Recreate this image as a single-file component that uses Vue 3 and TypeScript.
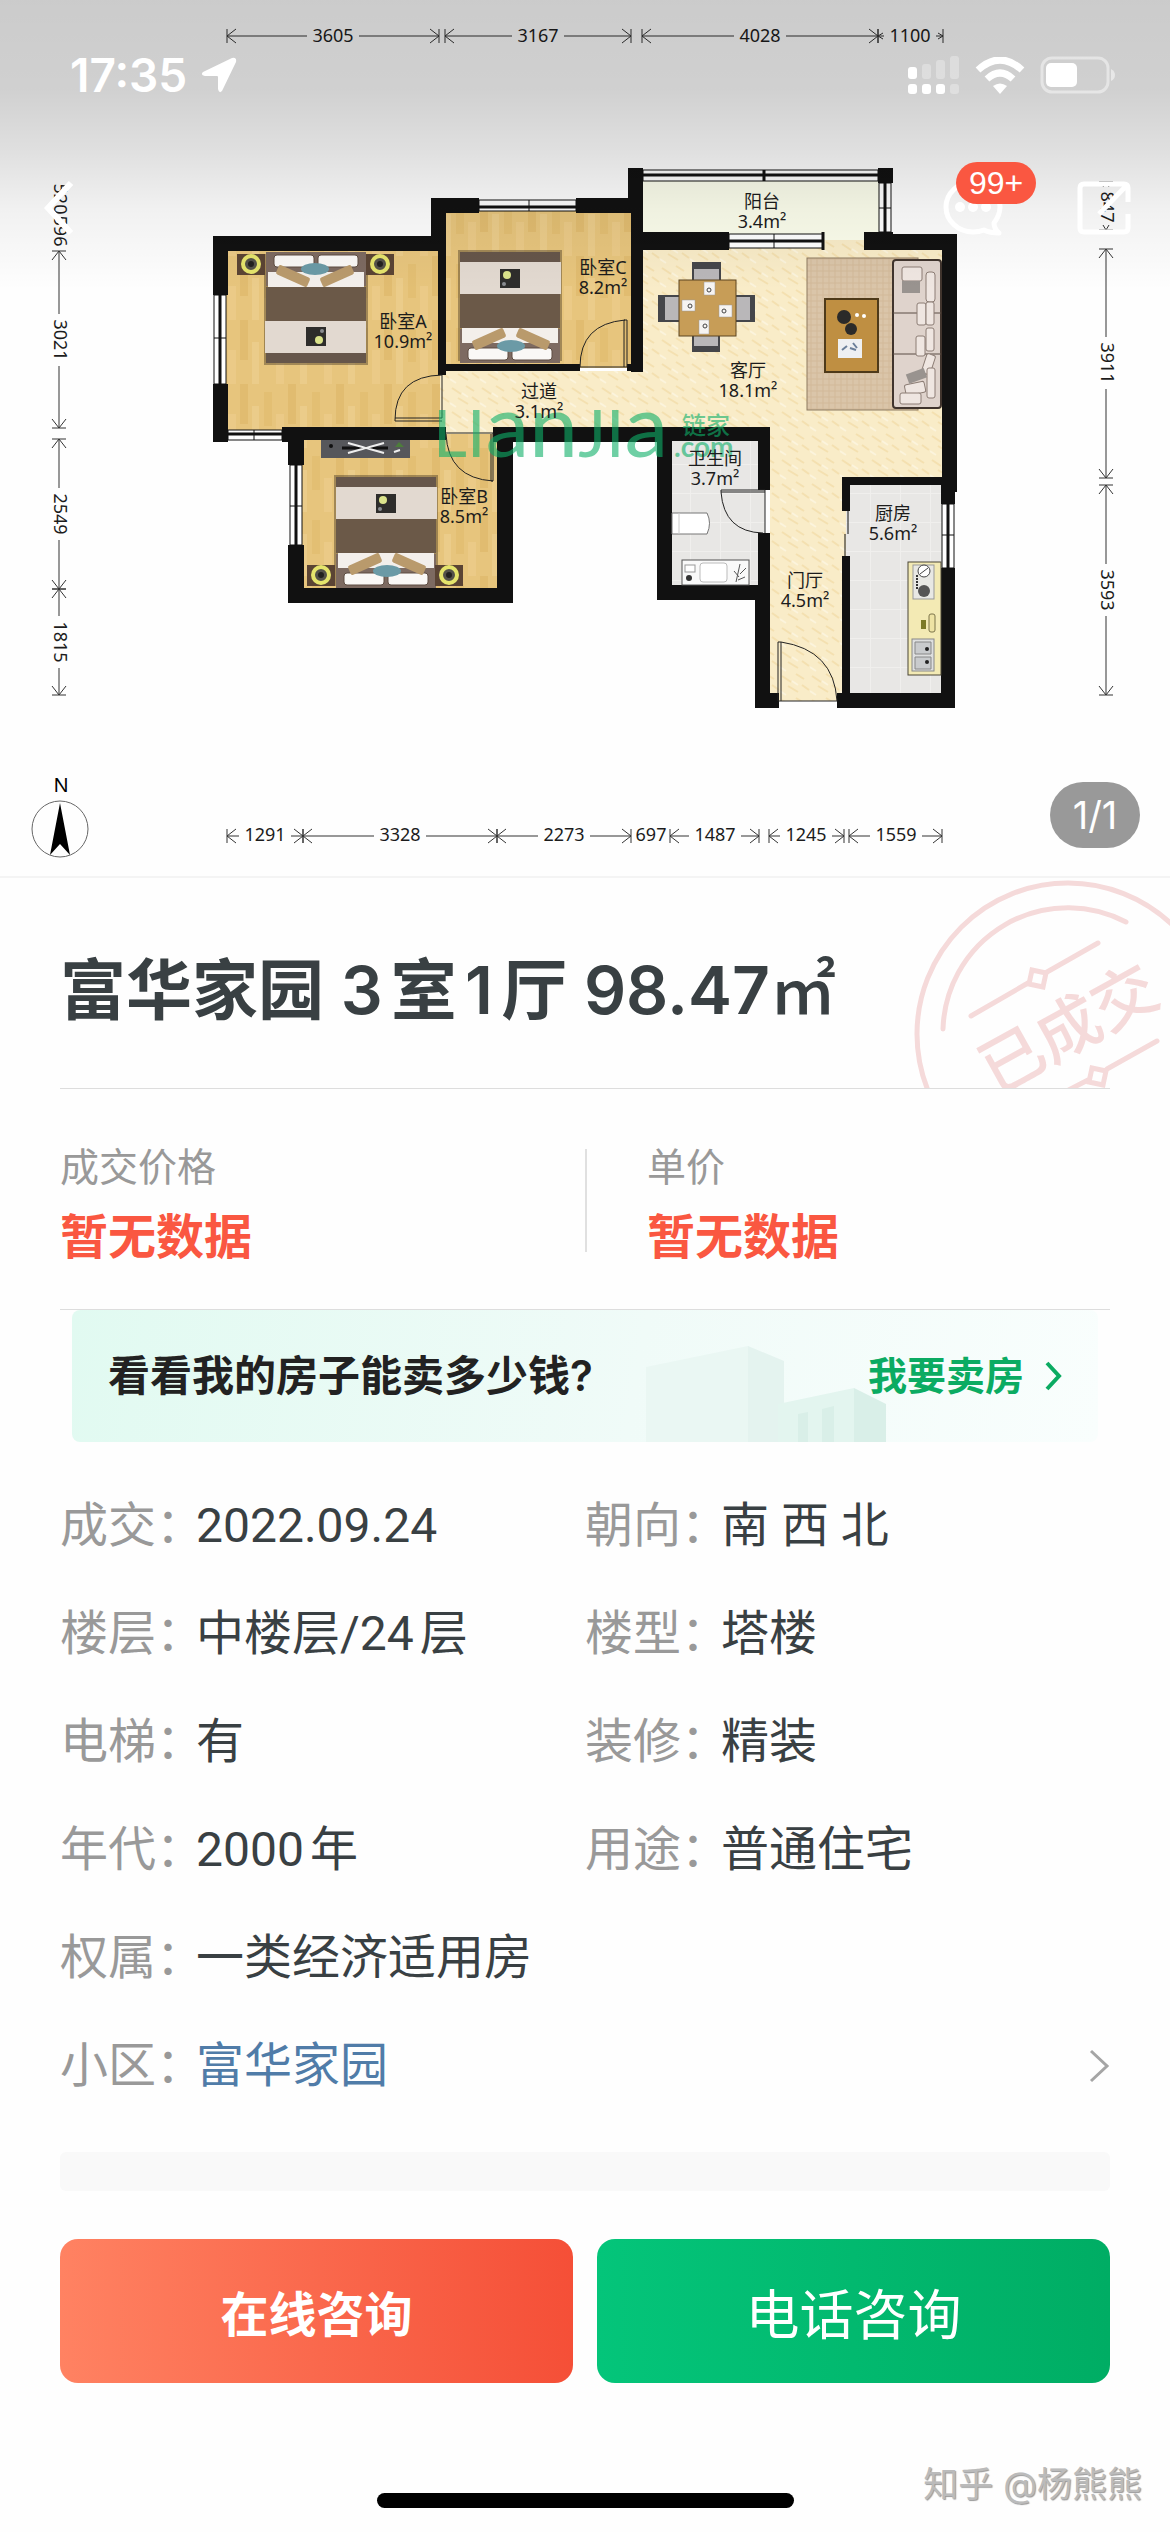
<script setup lang="ts">
interface Dim {
  label: string
  from: number
  to: number
  mid: number
  bare?: boolean
}

interface Room {
  name: string
  area: string
  x: number
  y: number
}

interface Fact {
  label: string
  value: string
}

const topDims: Dim[] = [
  { label: '3605', from: 227, to: 439, mid: 333 },
  { label: '3167', from: 445, to: 631, mid: 538 },
  { label: '4028', from: 642, to: 878, mid: 760 },
  { label: '1100', from: 878, to: 943, mid: 910 },
]

const bottomDims: Dim[] = [
  { label: '1291', from: 227, to: 303, mid: 265 },
  { label: '3328', from: 303, to: 497, mid: 400 },
  { label: '2273', from: 497, to: 631, mid: 564 },
  { label: '697', from: 631, to: 670, mid: 651, bare: true },
  { label: '1487', from: 670, to: 759, mid: 715 },
  { label: '1245', from: 769, to: 844, mid: 806 },
  { label: '1559', from: 849, to: 942, mid: 896 },
]

const leftDims: Dim[] = [
  { label: '520', from: 183, to: 214, mid: 199, bare: true },
  { label: '596', from: 214, to: 246, mid: 231, bare: true },
  { label: '3021', from: 251, to: 428, mid: 340 },
  { label: '2549', from: 439, to: 589, mid: 514 },
  { label: '1815', from: 589, to: 695, mid: 642 },
]

const rightDims: Dim[] = [
  { label: '847', from: 182, to: 230, mid: 207 },
  { label: '3911', from: 249, to: 478, mid: 363 },
  { label: '3593', from: 485, to: 695, mid: 590 },
]

// Dimension line along the x axis, centred on y = 0, with a gap for its label.
function dimPath(d: Dim): string {
  if (d.bare) return ''
  const head = d.to - d.from < 70 ? 5 : 9
  const gap = 26
  let p = `M${d.from} -7V7M${d.to} -7V7`
  p += `M${d.from + head} -${head - 2}L${d.from} 0L${d.from + head} ${head - 2}`
  p += `M${d.to - head} -${head - 2}L${d.to} 0L${d.to - head} ${head - 2}`
  if (d.mid - gap > d.from) p += `M${d.from} 0H${d.mid - gap}`
  if (d.mid + gap < d.to) p += `M${d.mid + gap} 0H${d.to}`
  return p
}

const rooms: Room[] = [
  { name: '卧室A', area: '10.9m²', x: 403, y: 328 },
  { name: '卧室C', area: '8.2m²', x: 603, y: 274 },
  { name: '过道', area: '3.1m²', x: 539, y: 398 },
  { name: '卧室B', area: '8.5m²', x: 464, y: 503 },
  { name: '阳台', area: '3.4m²', x: 762, y: 208 },
  { name: '客厅', area: '18.1m²', x: 748, y: 377 },
  { name: '卫生间', area: '3.7m²', x: 715, y: 465 },
  { name: '厨房', area: '5.6m²', x: 893, y: 520 },
  { name: '门厅', area: '4.5m²', x: 805, y: 587 },
]

const beds = [
  'translate(266 252)',
  'translate(560 363) rotate(180)',
  'translate(436 588) rotate(180)',
]

const lamps = [
  [251, 264],
  [380, 264],
  [321, 575],
  [449, 575],
]

const facts: Fact[] = [
  { label: '成交', value: '2022.09.24' },
  { label: '朝向', value: '南 西 北' },
  { label: '楼层', value: '中楼层/24层' },
  { label: '楼型', value: '塔楼' },
  { label: '电梯', value: '有' },
  { label: '装修', value: '精装' },
  { label: '年代', value: '2000年' },
  { label: '用途', value: '普通住宅' },
  { label: '权属', value: '一类经济适用房' },
]
</script>

<template>
  <main class="page">
    <section class="hero">
      <svg class="plan" viewBox="0 0 1170 876" role="img" aria-label="户型图">
        <defs>
          <pattern id="wood" width="48" height="64" patternUnits="userSpaceOnUse">
            <rect width="48" height="64" fill="#e7c57d" />
            <rect width="8" height="40" fill="#e1bc70" />
            <rect x="12" y="22" width="7" height="42" fill="#ebcc8a" />
            <rect x="24" y="8" width="8" height="34" fill="#e3bf73" />
            <rect x="36" y="30" width="8" height="34" fill="#ebca87" />
          </pattern>
          <pattern id="marble" width="30" height="24" patternUnits="userSpaceOnUse">
            <rect width="30" height="24" fill="#f9ecc8" />
            <path d="M2 4l9 6M16 2l8 5M8 14l10 6M22 13l7 5" stroke="#f4e0b0" stroke-width="2" />
            <path d="M12 9l6 4M0 19l6 4" stroke="#fcf4dc" stroke-width="2" />
          </pattern>
          <pattern id="tile" width="30" height="29" patternUnits="userSpaceOnUse">
            <rect width="30" height="29" fill="#e8e7e5" />
            <path d="M0 0H30M0 0V29" stroke="#f0efed" stroke-width="2" />
          </pattern>
          <pattern id="rug" width="6" height="6" patternUnits="userSpaceOnUse">
            <rect width="6" height="6" fill="#dac5a9" />
            <path d="M0 1H6M1 0V6" stroke="#d2b999" stroke-width="1" />
          </pattern>
        </defs>

        <g>
          <path d="M220 245H440V432H220zM440 205H636V368H440zM296 434H504V595H296z" fill="url(#wood)" />
          <path d="M440 371H640V240H950V482H846V701H770V430H493V434H440z" fill="url(#marble)" />
          <rect x="636" y="175" width="250" height="65" fill="#fcfeec" />
          <rect x="665" y="434" width="100" height="158" fill="url(#tile)" />
          <rect x="846" y="482" width="100" height="218" fill="url(#tile)" />
        </g>

        <path
          class="wall"
          d="M213 236H431V198H479V213H446V375H438V251H228V295H213z
             M213 384H228V442H213z M282 427H446V440H304V465H288V442H282z
             M288 545H304V588H497V442H493V427H770V490H758V441H672V585H758V533H770V693H779V708H755V600H657V442H513V603H288z
             M446 364H580V371H446z M576 198H628V168H643V232H729V250H643V372H631V371H627V364H631V213H576z
             M878 168H893V183H878z M864 232H893V234H957V492H955V504H941V485H850V511H842V477H942V250H864z
             M941 568H955V708H837V693H842V556H850V693H941z"
        />

        <g class="window">
          <path d="M479 200H576V211H479zM643 170H878V181H643zM879 183H891V232H879zM729 234H823V248H729zM214 295H226V384H214zM228 430H282V440H228zM290 465H302V545H290zM942 504H954V568H942z" />
          <path d="M848 511V534M845 534V556" />
          <path class="thick" d="M479 207H576M643 175H878M885 183V232M729 241H824M220 295V384M228 434H282M296 465V545M948 504V568M764 170V181M823 232V250" />
          <path d="M529 200V211M774 234V248M879 208H891M214 338H226M254 430V440M290 506H302M942 535H954" />
        </g>

        <g class="door">
          <path d="M395 420V421H442M395 418H442V375Q395 376 395 420" />
          <path d="M627 367V320H624V367M625 320Q580 324 580 367H627" />
          <path d="M446 433H493V481H491V434M446 434Q448 478 493 481" />
          <path d="M765 490V533M765 490H721V492H765M721 492Q724 532 763 533" />
          <path d="M778 701V642H781V701M781 642Q834 650 837 701H778" />
        </g>

        <g v-for="(bed, i) in beds" :key="i" :transform="bed">
          <rect x="-2" y="2" width="104" height="111" fill="#4d3d27" opacity=".45" />
          <rect width="100" height="34" fill="#7d6a61" />
          <rect x="2" y="20" width="96" height="17" fill="#f3efeb" />
          <rect x="8" y="3" width="40" height="12" rx="3" fill="#faf8f6" stroke="#5e4d42" />
          <rect x="52" y="3" width="40" height="12" rx="3" fill="#faf8f6" stroke="#5e4d42" />
          <rect x="10" y="19" width="34" height="10" rx="2" fill="#b99a6c" transform="rotate(24 27 24)" />
          <rect x="54" y="19" width="34" height="10" rx="2" fill="#b99a6c" transform="rotate(-24 71 24)" />
          <ellipse cx="49" cy="17" rx="14" ry="6" fill="#6b9aa6" />
          <rect y="35" width="100" height="34" fill="#6b5948" />
          <rect x="-1" y="69" width="101" height="32" fill="#e2d9d0" />
          <rect y="101" width="100" height="10" fill="#66564a" />
          <rect x="40" y="75" width="20" height="19" fill="#2e2d2b" />
          <circle cx="53" cy="88" r="4" fill="#dbe38b" />
          <circle cx="56" cy="79" r="2" fill="#8a8c90" />
        </g>

        <g v-for="([x, y], i) in lamps" :key="`lamp${i}`">
          <rect :x="x - 14" :y="y - 10" width="28" height="21" fill="#5b4434" />
          <circle :cx="x" :cy="y" r="8" fill="#54524a" stroke="#e5e46c" stroke-width="4" />
          <circle :cx="x" :cy="y" r="3" fill="#22211f" />
        </g>

        <g>
          <rect x="321" y="440" width="89" height="18" fill="#56575b" />
          <path d="M342 448H388" stroke="#111" stroke-width="3" />
          <path d="M348 443L384 453M348 453L384 443M394 452l6-2" stroke="#eee" stroke-width="2" />
          <circle cx="331" cy="446" r="2" fill="#111" />
          <path d="M395 447l4-5l5 5z" fill="#4d7d3b" />
        </g>

        <g>
          <path d="M692 262H721V282H692zM692 335H720V352H692zM658 295H682V322H658zM733 295H755V322H733z" fill="#45464a" />
          <path d="M694 269H719V282H694zM694 335H718V346H694zM665 297H682V320H665zM733 297H750V320H733z" fill="#b9b7b9" />
          <rect x="679" y="280" width="57" height="56" fill="#c79d57" stroke="#5d4520" />
          <path d="M704 282H715V295H704zM682 300H695V311H682zM719 305H732V317H719zM699 320H709V334H699z" fill="#f6f4f2" stroke="#999" stroke-width=".5" />
          <g fill="none" stroke="#444">
            <circle cx="709" cy="290" r="2" />
            <circle cx="690" cy="306" r="2" />
            <circle cx="724" cy="311" r="2" />
            <circle cx="705" cy="326" r="2" />
          </g>
        </g>

        <g>
          <rect x="807" y="258" width="111" height="152" fill="url(#rug)" stroke="#8d7a60" />
          <rect x="825" y="299" width="53" height="73" fill="#bf8f42" stroke="#4e3a1a" stroke-width="2" />
          <circle cx="844" cy="317" r="7" fill="#2b2a29" />
          <circle cx="851" cy="329" r="6" fill="#2b2a29" />
          <circle cx="857" cy="315" r="2" fill="#fff" />
          <circle cx="864" cy="316" r="2" fill="#fff" />
          <rect x="838" y="339" width="24" height="19" fill="#eef0f2" />
          <path d="M842 350l5-4M850 348l6 2M853 343l4 5" stroke="#6b7f99" stroke-width="2" />
          <rect x="893" y="260" width="48" height="148" rx="3" fill="#dfd3cc" stroke="#40342d" stroke-width="2" />
          <path d="M893 313H941M893 354H941" stroke="#5b4d45" />
          <g fill="#efe6e1" stroke="#8c7d75">
            <rect x="926" y="272" width="9" height="30" rx="3" />
            <rect x="902" y="267" width="20" height="14" rx="2" />
            <rect x="917" y="303" width="9" height="22" rx="2" />
            <rect x="926" y="302" width="8" height="23" rx="2" />
            <rect x="916" y="336" width="9" height="20" rx="2" />
            <rect x="926" y="328" width="8" height="23" rx="2" />
            <rect x="924" y="354" width="9" height="20" rx="2" transform="rotate(18 928 364)" />
            <rect x="927" y="368" width="8" height="30" rx="2" />
            <rect x="905" y="383" width="20" height="11" rx="2" transform="rotate(-12 915 388)" />
            <rect x="900" y="393" width="21" height="11" rx="2" />
          </g>
          <rect x="902" y="281" width="18" height="12" fill="#99938f" />
          <rect x="907" y="371" width="19" height="10" fill="#99938f" transform="rotate(-20 916 376)" />
        </g>

        <g>
          <path d="M672 513H707Q712 523 707 534H672z" fill="#fff" stroke="#777" />
          <path d="M679 513V534" stroke="#ccc" />
          <rect x="682" y="560" width="67" height="25" fill="#f9f9f9" stroke="#555" />
          <rect x="700" y="563" width="27" height="19" rx="3" fill="#fff" stroke="#bbb" />
          <rect x="685" y="565" width="10" height="7" fill="#fff" stroke="#999" />
          <circle cx="689" cy="578" r="3" fill="#333" />
          <path d="M736 582l4-18M740 574l6-6M739 577l-5-6M738 580l7-3" stroke="#555" />
        </g>

        <g>
          <rect x="908" y="562" width="33" height="113" fill="#f3eab4" stroke="#4a4636" />
          <rect x="913" y="565" width="21" height="34" fill="#e8e8e4" stroke="#999" />
          <circle cx="924" cy="571" r="6" fill="#fff" stroke="#444" />
          <path d="M920 574l8-6" stroke="#444" />
          <circle cx="924" cy="591" r="6" fill="#555" />
          <path d="M917 575V589" stroke="#333" stroke-width="2" stroke-dasharray="2 1" />
          <rect x="921" y="620" width="5" height="9" fill="#7d7a27" />
          <rect x="929" y="614" width="6" height="18" rx="2" fill="#eee3a4" stroke="#7c744b" />
          <rect x="912" y="639" width="22" height="32" fill="#dedfdf" stroke="#888" />
          <path d="M915 642H931V654H915zM915 657H931V669H915z" fill="#c9cbcd" stroke="#888" />
          <circle cx="927" cy="649" r="2" fill="#222" />
          <circle cx="927" cy="662" r="2" fill="#222" />
        </g>

        <g class="brand">
          <text x="433" y="457"><tspan class="caps">LI</tspan><tspan>an</tspan><tspan class="caps">JI</tspan><tspan>a</tspan></text>
          <text class="brand-cn" x="682" y="434">链家</text>
          <text class="brand-com" x="674" y="457">.com</text>
        </g>

        <g class="label">
          <template v-for="room in rooms" :key="room.name">
            <text :x="room.x" :y="room.y">{{ room.name }}</text>
            <text :x="room.x" :y="room.y + 20">{{ room.area }}</text>
          </template>
        </g>

        <g class="dim">
          <g v-for="d in topDims" :key="d.label" transform="translate(0 36)">
            <path :d="dimPath(d)" />
            <text :x="d.mid" y="6">{{ d.label }}</text>
          </g>
          <g v-for="d in bottomDims" :key="d.label" transform="translate(0 836)">
            <path :d="dimPath(d)" />
            <text :x="d.mid" y="5">{{ d.label }}</text>
          </g>
          <g v-for="d in leftDims" :key="d.label" transform="translate(59 0) rotate(90)">
            <path :d="dimPath(d)" />
            <text :x="d.mid" y="5">{{ d.label }}</text>
          </g>
          <g v-for="d in rightDims" :key="d.label" transform="translate(1106 0) rotate(90)">
            <path :d="dimPath(d)" />
            <text :x="d.mid" y="5">{{ d.label }}</text>
          </g>
        </g>

        <g>
          <text class="north" x="61" y="792">N</text>
          <circle cx="60" cy="829" r="28" fill="none" stroke="#666" />
          <path d="M60 803L70 855L60 844L50 855z" fill="#000" />
        </g>
      </svg>

      <header class="top">
        <div class="status">
          <span class="clock">17:35</span>
          <svg class="locate" viewBox="0 0 36 36" width="36" height="36" aria-hidden="true">
            <path d="M2 15L31 1Q36 0 35 5L21 34Q18 37 17 32V20Q17 19 16 19H4Q-1 18 2 15z" fill="#fff" />
          </svg>
          <svg class="signal" viewBox="0 0 52 38" width="52" height="38" fill="#fff" aria-hidden="true">
            <rect y="11" width="9" height="12" rx="3" />
            <g opacity=".3">
              <rect x="14" y="8" width="9" height="15" rx="3" />
              <rect x="28" y="4" width="9" height="19" rx="3" />
              <rect x="42" width="9" height="23" rx="3" />
              <rect x="42" y="28" width="9" height="10" rx="3" />
            </g>
            <rect y="28" width="9" height="10" rx="3" />
            <rect x="14" y="28" width="9" height="10" rx="3" />
            <rect x="28" y="28" width="9" height="10" rx="3" />
          </svg>
          <svg class="wifi" viewBox="0 0 50 37" width="50" height="37" aria-hidden="true">
            <path d="M3 13Q25 -7 47 13M12 22Q25 10 38 22" fill="none" stroke="#fff" stroke-width="7" />
            <path d="M18 29Q25 24 32 29L25 37z" fill="#fff" />
          </svg>
          <svg class="battery" viewBox="0 0 76 38" width="76" height="38" aria-hidden="true">
            <rect x="2" y="2" width="66" height="34" rx="10" fill="none" stroke="#fff" stroke-width="3" opacity=".45" />
            <path d="M71 13Q75 15 75 19T71 25z" fill="#fff" opacity=".5" />
            <rect x="6" y="7" width="31" height="24" rx="5" fill="#fff" />
          </svg>
        </div>
        <nav class="tools">
          <button class="tool" type="button" aria-label="返回">
            <svg viewBox="0 0 30 54" width="30" height="54"><path d="M27 2L4 27L27 52" fill="none" stroke="#fff" stroke-width="6" /></svg>
          </button>
          <button class="tool chat" type="button" aria-label="消息">
            <svg viewBox="0 0 62 56" width="62" height="56">
              <path d="M52 43Q58 35 58 27A27 25 0 1 0 31 52Q37 52 42 50Q48 53 57 53Q52 49 52 43z" fill="none" stroke="#fff" stroke-width="5" stroke-linejoin="round" />
              <g fill="#fff"><circle cx="18" cy="27" r="5" /><circle cx="31" cy="27" r="5" /><circle cx="44" cy="27" r="5" /></g>
            </svg>
            <span class="badge">99+</span>
          </button>
          <button class="tool" type="button" aria-label="分享">
            <svg viewBox="0 0 56 56" width="56" height="56">
              <path d="M52 22V8Q52 4 48 4H8Q4 4 4 8V48Q4 52 8 52H48Q52 52 52 48V34M51 5L23 34" fill="none" stroke="#fff" stroke-width="5" />
            </svg>
          </button>
        </nav>
      </header>
      <span class="counter">1/1</span>
    </section>

    <section class="headline">
      <svg class="stamp" viewBox="0 0 256 211" width="256" height="211" aria-hidden="true">
        <g fill="none" stroke="#f5dada" stroke-width="5" stroke-linecap="round">
          <circle cx="154" cy="156" r="151" />
          <path d="M29 151A125 125 0 0 1 212 44" />
          <path d="M57 138L114 105M133 94L184 65M143 218L174 202M193 191L243 163" />
          <path stroke-linecap="butt" d="M118 92L132 95L129 109L115 106zM178 190L192 193L189 207L175 204z" />
        </g>
        <text class="stamp-text" x="154" y="150" transform="rotate(-29 154 150)" dominant-baseline="central">已成交</text>
      </svg>
      <h1>富华家园 3室1厅 98.47<span class="unit">㎡</span></h1>
    </section>

    <dl class="prices">
      <div class="price">
        <dt>成交价格</dt>
        <dd>暂无数据</dd>
      </div>
      <div class="price">
        <dt>单价</dt>
        <dd>暂无数据</dd>
      </div>
    </dl>

    <a class="banner" href="#sell">
      <svg class="skyline" viewBox="0 0 240 98" width="240" height="98" aria-hidden="true">
        <path d="M0 23L102 2V98H0z" fill="#eaf7f3" />
        <path d="M102 2L138 17V98H102z" fill="#e4f3ef" />
        <path d="M132 60L208 44V98H132z" fill="#e3f5ef" />
        <path d="M208 44L240 60V98H208z" fill="#d9efe8" />
        <path d="M152 70l10-2V98H152zM176 65l12-3V98H176z" fill="#d9efe8" />
      </svg>
      <span class="question">看看我的房子能卖多少钱?</span>
      <span class="sell">我要卖房</span>
      <svg viewBox="0 0 18 30" width="18" height="30" aria-hidden="true">
        <path d="M3 2L15 15L3 28" fill="none" stroke="#0bab62" stroke-width="4" />
      </svg>
    </a>

    <dl class="facts">
      <div v-for="fact in facts" :key="fact.label" class="fact">
        <dt>{{ fact.label }}：</dt>
        <dd>{{ fact.value }}</dd>
      </div>
      <div class="fact wide">
        <dt>小区：</dt>
        <dd><a class="estate" href="#estate">富华家园</a></dd>
        <svg class="more" viewBox="0 0 22 34" width="22" height="34" aria-hidden="true">
          <path d="M3 2L19 17L3 32" fill="none" stroke="#a5a5a5" stroke-width="3" />
        </svg>
      </div>
    </dl>

    <div class="spacer"></div>

    <div class="actions">
      <button class="action online" type="button">在线咨询</button>
      <button class="action phone" type="button">电话咨询</button>
    </div>

    <footer class="foot">
      <span class="home"></span>
      <span class="credit">知乎 @杨熊熊</span>
    </footer>
  </main>
</template>

<style>
body {
  margin: 0;
  background: #fefefe;
}
</style>

<style scoped>
.page {
  display: flex;
  flex-direction: column;
  min-height: 100vh;
  font-family: Inter, "Noto Sans CJK SC", sans-serif;
  color: #394043;
  text-autospace: normal;
}

.hero {
  position: relative;
  border-bottom: 2px solid #f4f4f4;
}

.plan {
  display: block;
  width: 100%;
  height: auto;
  text-autospace: no-autospace;
}

.wall {
  fill: #111;
}

.window path {
  fill: #fff;
  stroke: #111;
  stroke-width: 1;
}

.window .thick {
  fill: none;
  stroke-width: 3;
}

.door path {
  fill: none;
  stroke: #222;
  stroke-width: 1;
}

.label,
.dim {
  font-family: "Noto Sans", "Noto Sans CJK SC", sans-serif;
  font-size: 18px;
  text-anchor: middle;
  fill: #1c1c1c;
}

.dim path {
  fill: none;
  stroke: #333;
  stroke-width: 1;
}

.north {
  font-family: "Noto Sans", sans-serif;
  font-size: 20px;
  text-anchor: middle;
}

.brand {
  font-family: Lato, sans-serif;
  font-size: 88px;
  fill: #0fb069;
  opacity: 0.6;
}

.caps {
  font-size: 66px;
}

.brand-cn {
  font-family: "Noto Sans CJK SC", sans-serif;
  font-size: 24px;
  font-weight: 500;
}

.brand-com {
  font-size: 28px;
  font-weight: 700;
}

.top {
  position: absolute;
  inset: 0 0 auto;
  box-sizing: border-box;
  height: 290px;
  padding: 46px 38px 0 70px;
  background: linear-gradient(
    rgba(0, 0, 0, 0.2) 0,
    rgba(0, 0, 0, 0.18) 90px,
    rgba(0, 0, 0, 0.12) 150px,
    rgba(0, 0, 0, 0.05) 210px,
    rgba(0, 0, 0, 0.02) 260px,
    rgba(0, 0, 0, 0) 290px
  );
}

.status {
  display: flex;
  align-items: center;
  height: 58px;
  padding-right: 16px;
}

.clock {
  color: #fff;
  font-size: 46px;
  font-weight: 600;
  line-height: 58px;
}

.locate {
  margin-left: 14px;
}

.signal {
  margin-left: auto;
}

.wifi {
  margin: 0 15px;
}

.tools {
  display: flex;
  align-items: center;
  gap: 72px;
  height: 56px;
  margin: 76px 0 0 -26px;
}

.tool {
  position: relative;
  display: flex;
  padding: 0;
  border: 0;
  background: none;
}

.chat {
  margin-left: auto;
}

.badge {
  position: absolute;
  left: 14px;
  bottom: 32px;
  padding: 0 13px;
  border-radius: 21px;
  background: #fa5741;
  color: #fff;
  font-size: 32px;
  line-height: 42px;
}

.counter {
  position: absolute;
  right: 30px;
  bottom: 28px;
  min-width: 90px;
  border-radius: 33px;
  background: #999;
  color: #fff;
  font-size: 38px;
  line-height: 66px;
  text-align: center;
}

.headline {
  position: relative;
  margin-left: 60px;
  padding: 64px 0 51px;
  overflow: hidden;
}

.headline::after {
  content: "";
  position: absolute;
  left: 0;
  right: 60px;
  bottom: 0;
  border-bottom: 1px solid #ddd;
}

.stamp {
  position: absolute;
  top: 0;
  right: 0;
}

.stamp-text {
  font-size: 64px;
  font-weight: 500;
  text-anchor: middle;
  fill: #f5dada;
}

h1 {
  margin: 0;
  font-size: 66px;
  font-weight: 600;
  line-height: 96px;
}

.unit {
  font-weight: 500;
}

.prices {
  display: grid;
  grid-template-columns: 1fr 1fr;
  margin: 0 60px;
  padding: 50px 0 40px;
  border-bottom: 1px solid #ddd;
}

.price + .price {
  padding-left: 62px;
  background: linear-gradient(#e0e0e0, #e0e0e0) 0 10px / 2px 103px no-repeat;
}

.price dt {
  color: #999;
  font-size: 39px;
  line-height: 56px;
}

.price dd {
  margin: 10px 0 0;
  color: #fa5741;
  font-size: 48px;
  font-weight: 600;
  line-height: 64px;
}

.banner {
  position: relative;
  display: flex;
  align-items: center;
  margin: 0 72px;
  padding: 0 36px;
  border-radius: 8px;
  background: linear-gradient(100deg, #e1faf1, #f0fbf8 55%, #f9fefd);
  line-height: 132px;
  text-decoration: none;
}

.skyline {
  position: absolute;
  right: 212px;
  bottom: 0;
}

.question {
  flex: 1;
  color: #222;
  font-size: 42px;
  font-weight: 600;
}

.sell {
  position: relative;
  margin-right: 20px;
  color: #0bab62;
  font-size: 39px;
  font-weight: 600;
}

.facts {
  display: grid;
  grid-template-columns: 1fr 1fr;
  margin: 30px 60px 0;
  font-family: Roboto, "Noto Sans CJK SC", sans-serif;
  font-size: 48px;
  line-height: 108px;
}

.fact {
  display: flex;
  align-items: center;
}

.fact dt {
  flex: 0 0 136px;
  min-width: 0;
  white-space: nowrap;
  color: #999;
}

.fact dd {
  margin: 0;
}

.fact:nth-child(9),
.wide {
  grid-column: 1 / -1;
}

.estate {
  color: #507ca8;
  text-decoration: none;
}

.more {
  margin-left: auto;
}

.spacer {
  height: 39px;
  margin: 32px 60px 0;
  border-radius: 6px;
  background: #f9f9f9;
}

.actions {
  display: grid;
  grid-template-columns: 1fr 1fr;
  gap: 24px;
  margin: 48px 60px 0;
}

.action {
  height: 144px;
  padding: 0;
  border: 0;
  border-radius: 18px;
  color: #fff;
  font-family: inherit;
}

.online {
  background: linear-gradient(90deg, #ff8262, #f54f37);
  font-size: 48px;
  font-weight: 600;
}

.phone {
  background: linear-gradient(90deg, #04c57a, #00ad64);
  font-size: 54px;
}

.foot {
  display: grid;
  grid-template-columns: 1fr 417px 1fr;
  align-items: end;
  margin-top: auto;
  padding: 0 28px 24px;
}

.home {
  grid-column: 2;
  height: 15px;
  border-radius: 8px;
  background: #000;
}

.credit {
  justify-self: end;
  color: #bbb;
  font-size: 35px;
  line-height: 48px;
  text-shadow: 1px 1px 1px #999;
  white-space: nowrap;
}
</style>
